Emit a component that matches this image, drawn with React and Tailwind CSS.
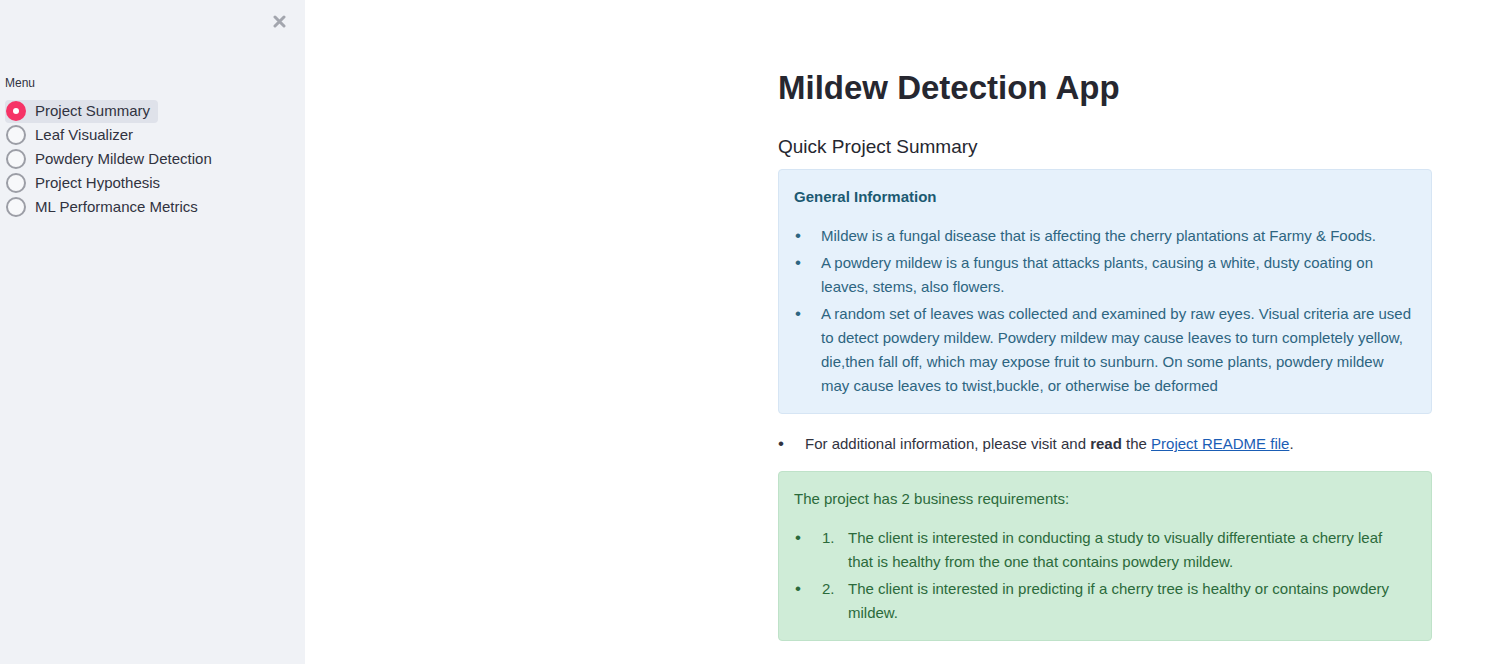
import React from 'react';

const menu = [
  'Project Summary',
  'Leaf Visualizer',
  'Powdery Mildew Detection',
  'Project Hypothesis',
  'ML Performance Metrics',
];

function Radio({ checked }) {
  if (checked) {
    return (
      <span className="flex h-[20px] w-[20px] items-center justify-center rounded-full bg-[#f63366]">
        <span className="h-[6px] w-[6px] rounded-full bg-white" />
      </span>
    );
  }
  return <span className="h-[20px] w-[20px] rounded-full border-2 border-[#9c9ea6] bg-[#f7f8fa]" />;
}

function Sidebar() {
  return (
    <aside className="relative h-[664px] w-[305px] shrink-0 bg-[#f0f2f6] text-[#31333f]">
      <button className="absolute left-[271px] top-[13px] flex h-[16px] w-[16px] items-center justify-center text-[#a3a6ae]">
        <svg width="13" height="13" viewBox="0 0 13 13">
          <path d="M2 2 L11 11 M11 2 L2 11" stroke="currentColor" strokeWidth="3" strokeLinecap="round" />
        </svg>
      </button>
      <div className="pt-[75px] pl-[5px]">
        <div className="text-[12px] leading-[16px]">Menu</div>
        <div className="mt-[8px] flex flex-col">
          {menu.map((m, i) => (
            <div key={m} className="flex h-[24px] items-center">
              <div
                className={
                  'flex h-[23px] items-center gap-[9px] rounded-[4px] pl-[1px] pr-[8px] ' +
                  (i === 0 ? 'bg-[#dfe2ea]' : '')
                }
              >
                <Radio checked={i === 0} />
                <span className="text-[15px] leading-[24px]">{m}</span>
              </div>
            </div>
          ))}
        </div>
      </div>
    </aside>
  );
}

function Bullet({ children }) {
  return (
    <li className="flex">
      <span className="w-[27px] shrink-0 pl-[1px] text-[17px] leading-[24px]">•</span>
      <div className="flex-1">{children}</div>
    </li>
  );
}

export default function App() {
  return (
    <div className="flex h-[664px] w-[1498px] overflow-hidden bg-white font-['Liberation_Sans',Arial,sans-serif]">
      <Sidebar />
      <main className="flex-1 pl-[473px]">
        <div className="w-[654px] pt-[67px]">
          <h1 className="text-[33px] font-bold leading-[42px] text-[#262730]">Mildew Detection App</h1>
          <h3 className="mt-[24px] text-[19px] leading-[28px] text-[#262730]">Quick Project Summary</h3>

          <div className="mt-[8px] rounded-[4px] border border-[#d6e5f4] bg-[#e6f1fb] px-[15px] pt-[15px] pb-[15px] text-[15px] leading-[24px] text-[#2d6581]">
            <div className="font-bold text-[#1c5a72]">General Information</div>
            <ul className="mt-[15px] flex flex-col gap-[3px]">
              <Bullet>Mildew is a fungal disease that is affecting the cherry plantations at Farmy &amp; Foods.</Bullet>
              <Bullet>A powdery mildew is a fungus that attacks plants, causing a white, dusty coating on leaves, stems, also flowers.</Bullet>
              <Bullet>
                A random set of leaves was collected and examined by raw eyes. Visual criteria are used to detect powdery
                mildew. Powdery mildew may cause leaves to turn completely yellow, die,then fall off, which may expose fruit
                to sunburn. On some plants, powdery mildew<br />may cause leaves to twist,buckle, or otherwise be deformed
              </Bullet>
            </ul>
          </div>

          <ul className="mt-[18px] text-[15px] leading-[24px] text-[#31333f]">
            <li className="flex">
              <span className="w-[27px] shrink-0 text-[17px]">•</span>
              <div>
                For additional information, please visit and <b>read</b> the{' '}
                <a href="#" className="text-[#1a5db5] underline">Project README file</a>.
              </div>
            </li>
          </ul>

          <div className="mt-[15px] rounded-[4px] border border-[#bfe2c9] bg-[#cfecd7] px-[15px] pt-[15px] pb-[15px] text-[15px] leading-[24px] text-[#2b6a3b]">
            <div>The project has 2 business requirements:</div>
            <ul className="mt-[15px] flex flex-col gap-[3px]">
              <Bullet>
                <div className="flex">
                  <span className="w-[27px] shrink-0 pl-[1px]">1.</span>
                  <span>
                    The client is interested in conducting a study to visually differentiate a cherry leaf<br />that is
                    healthy from the one that contains powdery mildew.
                  </span>
                </div>
              </Bullet>
              <Bullet>
                <div className="flex">
                  <span className="w-[27px] shrink-0 pl-[1px]">2.</span>
                  <span>The client is interested in predicting if a cherry tree is healthy or contains powdery mildew.</span>
                </div>
              </Bullet>
            </ul>
          </div>
        </div>
      </main>
    </div>
  );
}
